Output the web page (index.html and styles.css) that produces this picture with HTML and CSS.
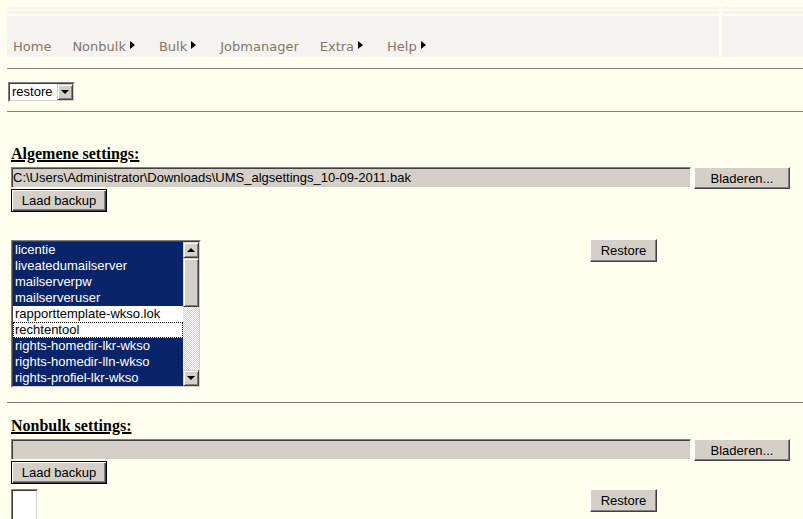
FILE: index.html
```html
<!DOCTYPE html>
<html lang="nl">
<head>
    <meta charset="UTF-8">
    <title>UMS - Restore</title>
    <link rel="stylesheet" href="styles.css">
</head>
<body>

    <div class="topbar">
        <div class="bar"></div>
        <div class="bar"></div>
        <div class="bar"></div>
        <div class="bar"></div>
        <nav class="menu">
            <a href="#" class="menu-item">Home</a>
            <a href="#" class="menu-item">Nonbulk<span class="arrow"></span></a>
            <a href="#" class="menu-item">Bulk<span class="arrow"></span></a>
            <a href="#" class="menu-item">Jobmanager</a>
            <a href="#" class="menu-item">Extra<span class="arrow"></span></a>
            <a href="#" class="menu-item">Help<span class="arrow"></span></a>
        </nav>
        <div class="menu-rest"></div>
    </div>

    <hr class="rule rule-top">

    <div class="combo">
        <div class="combo-inner">
            <span class="combo-text">restore</span>
            <span class="combo-btn"></span>
        </div>
    </div>

    <hr class="rule rule-mid">

    <div class="section section-first">
        <div class="section-title">Algemene settings:</div>
        <div class="file-row">
            <input class="file-path" type="text" value="C:\Users\Administrator\Downloads\UMS_algsettings_10-09-2011.bak" readonly>
            <button class="btn btn-browse">Bladeren...</button>
        </div>
        <button class="btn btn-default">Laad backup</button>

        <div class="list-row list-row-first">
            <div class="listbox">
                <div class="listbox-inner">
                    <div class="options">
                        <div class="option selected">licentie</div>
                        <div class="option selected">liveatedumailserver</div>
                        <div class="option selected">mailserverpw</div>
                        <div class="option selected">mailserveruser</div>
                        <div class="option">rapporttemplate-wkso.lok</div>
                        <div class="option focused">rechtentool</div>
                        <div class="option selected">rights-homedir-lkr-wkso</div>
                        <div class="option selected">rights-homedir-lln-wkso</div>
                        <div class="option selected">rights-profiel-lkr-wkso</div>
                    </div>
                    <div class="scrollbar">
                        <div class="sb-btn sb-up"></div>
                        <div class="sb-thumb"></div>
                        <div class="sb-track"></div>
                        <div class="sb-btn sb-down"></div>
                    </div>
                </div>
            </div>
            <button class="btn btn-restore">Restore</button>
        </div>
    </div>

    <hr class="rule rule-section">

    <div class="section section-second">
        <div class="section-title">Nonbulk settings:</div>
        <div class="file-row">
            <input class="file-path" type="text" value="" readonly>
            <button class="btn btn-browse">Bladeren...</button>
        </div>
        <button class="btn btn-default">Laad backup</button>

        <div class="list-row list-row-second">
            <div class="listbox listbox-empty">
                <div class="listbox-inner"></div>
            </div>
            <button class="btn btn-restore">Restore</button>
        </div>
    </div>

</body>
</html>
```

FILE: styles.css
```css
* {
    box-sizing: border-box;
}

body {
    margin: 0;
    padding: 0 0 0 7px;
    background-color: #fffff0;
    font-family: 'Liberation Sans', Arial, sans-serif;
    font-size: 13px;
    color: #000;
}

/* top menu */

.topbar {
    display: grid;
    grid-template-columns: 712px 1fr;
    grid-template-rows: 2px 3px 41px;
    column-gap: 3px;
    row-gap: 2px;
    margin-top: 7px;
}

.bar,
.menu,
.menu-rest {
    background-color: #f4f3ef;
}

.menu {
    display: flex;
    align-items: flex-end;
    gap: 21px;
    padding: 0 0 2px 6px;
}

.menu-item {
    font-family: 'DejaVu Sans', Verdana, sans-serif;
    font-size: 13px;
    line-height: 16px;
    color: #83786a;
    text-decoration: none;
    white-space: nowrap;
}

.arrow {
    display: inline-block;
    width: 0;
    height: 0;
    border-left: 5px solid #000;
    border-top: 4px solid transparent;
    border-bottom: 4px solid transparent;
    margin: 0 3px 0 4px;
    vertical-align: 2px;
}

/* rules */

.rule {
    height: 0;
    border: 0;
    border-top: 1px solid #808080;
    margin: 0;
}

.rule-top { margin-top: 11px; }
.rule-mid { margin-top: 9px; }
.rule-section { margin-top: 14px; }

/* dropdown */

.combo {
    width: 67px;
    height: 20px;
    margin: 13px 0 0 1px;
    border: 1px solid;
    border-color: #808080 #fff #fff #808080;
}

.combo-inner {
    display: flex;
    height: 100%;
    border: 1px solid;
    border-color: #404040 #d4d0c8 #d4d0c8 #404040;
    background: #fff;
}

.combo-text {
    flex: 1;
    padding-left: 2px;
    line-height: 16px;
}

.combo-btn,
.sb-btn {
    position: relative;
    width: 16px;
    height: 16px;
    background-color: #d4d0c8;
    border: 1px solid;
    border-color: #d4d0c8 #404040 #404040 #d4d0c8;
    box-shadow: inset 1px 1px #fff, inset -1px -1px #808080;
}

.combo-btn::before,
.sb-down::before,
.sb-up::before {
    content: '';
    position: absolute;
    left: 3px;
    top: 5px;
    border-left: 4px solid transparent;
    border-right: 4px solid transparent;
}

.combo-btn::before,
.sb-down::before {
    border-top: 4px solid #000;
}

.sb-up::before {
    border-bottom: 4px solid #000;
}

/* sections */

.section {
    padding-left: 4px;
}

.section-first .section-title { margin-top: 33px; }
.section-second .section-title { margin-top: 14px; }

.section-title {
    font-family: 'Liberation Serif', 'Times New Roman', serif;
    font-weight: bold;
    font-size: 16px;
    line-height: 18px;
    text-decoration: underline;
    text-decoration-thickness: 2px;
    text-underline-offset: 1px;
}

.file-row {
    display: flex;
    align-items: flex-start;
    margin-top: 4px;
}

.file-path {
    width: 680px;
    height: 21px;
    margin: 0;
    padding: 0 1px;
    font-family: 'Liberation Sans', Arial, sans-serif;
    font-size: 13px;
    color: #000;
    background-color: #d4d0c8;
    border: 1px solid;
    border-color: #808080 #fff #fff #808080;
    box-shadow: inset 1px 1px #404040, inset -1px -1px #d4d0c8;
    outline: none;
}

.btn {
    display: block;
    margin: 0;
    padding: 0;
    font-family: 'Liberation Sans', Arial, sans-serif;
    font-size: 13px;
    color: #000;
    background-color: #d4d0c8;
    border: 1px solid;
    border-color: #fff #404040 #404040 #fff;
    box-shadow: inset -1px -1px #808080;
    cursor: pointer;
}

.btn-browse {
    width: 96px;
    height: 22px;
    margin-left: 3px;
}

.btn-default {
    width: 96px;
    height: 23px;
    border-color: #000;
    box-shadow: inset 1px 1px #fff, inset -1px -1px #404040, inset -2px -2px #808080;
}

.btn-restore {
    width: 67px;
    height: 23px;
}

/* list boxes */

.list-row {
    display: flex;
    align-items: flex-start;
}

.list-row-first { margin-top: 27px; }
.list-row-second { margin-top: 5px; }

.list-row-first .btn-restore { margin-left: 389px; }
.list-row-second .btn-restore { margin-left: 552px; }

.listbox {
    width: 190px;
    height: 148px;
    margin-top: 1px;
    border: 1px solid;
    border-color: #808080 #fff #fff #808080;
}

.listbox-empty {
    width: 27px;
    height: 40px;
    margin-top: 0;
}

.listbox-inner {
    display: flex;
    height: 100%;
    border: 1px solid;
    border-color: #404040 #d4d0c8 #d4d0c8 #404040;
    background: #fff;
}

.options {
    flex: 1;
    overflow: hidden;
}

.option {
    height: 16px;
    line-height: 16px;
    padding-left: 2px;
    white-space: nowrap;
}

.option.selected {
    background-color: #0a246a;
    color: #fff;
}

.option.focused {
    outline: 1px dotted #000;
    outline-offset: -1px;
}

.scrollbar {
    display: flex;
    flex-direction: column;
    width: 16px;
}

.sb-thumb {
    height: 49px;
    background-color: #d4d0c8;
    border: 1px solid;
    border-color: #d4d0c8 #404040 #404040 #d4d0c8;
    box-shadow: inset 1px 1px #fff, inset -1px -1px #808080;
}

.sb-track {
    flex: 1;
    background: repeating-conic-gradient(#d4d0c8 0 25%, #fff 0 50%) 0 0 / 2px 2px;
}
```
